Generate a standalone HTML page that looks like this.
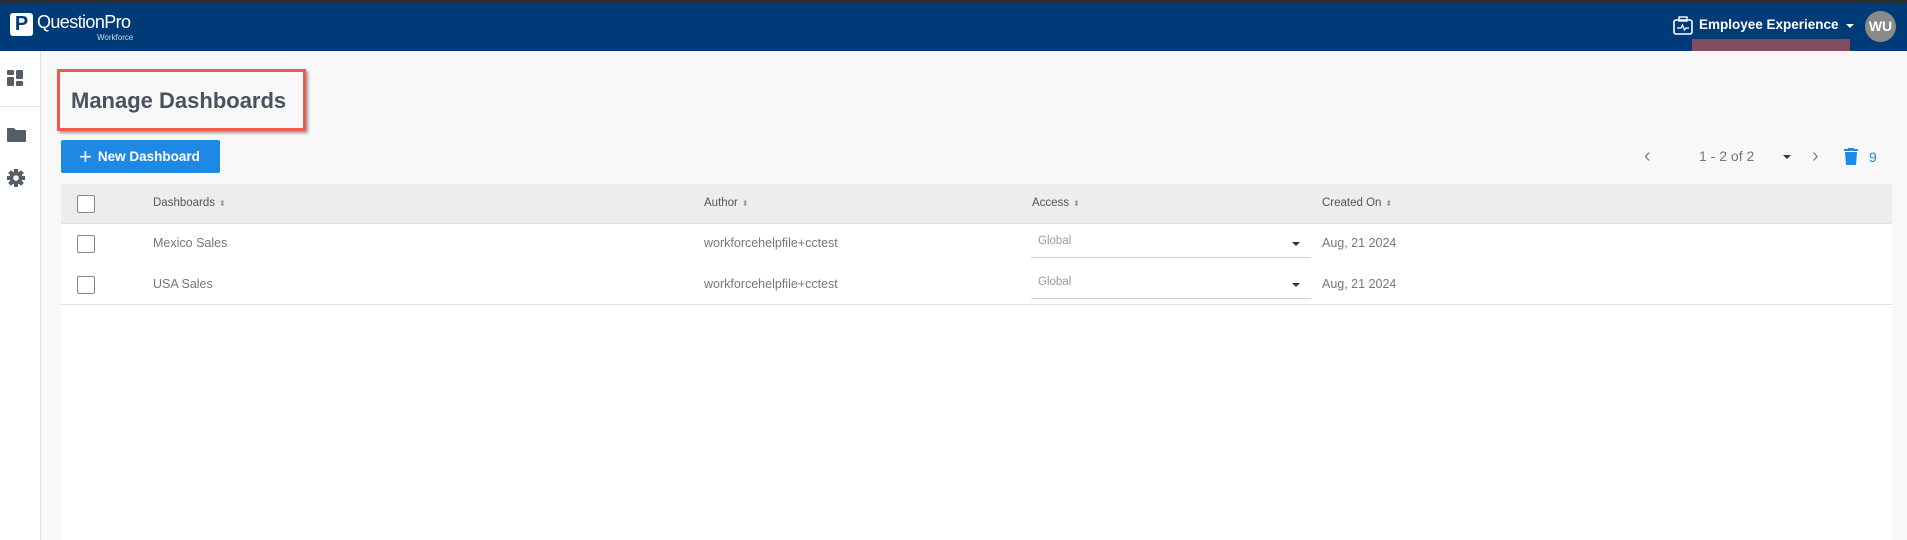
<!DOCTYPE html>
<html><head><meta charset="utf-8"><style>
*{margin:0;padding:0;box-sizing:border-box}
body{width:1907px;height:540px;overflow:hidden;background:#f8f8f8;font-family:"Liberation Sans",sans-serif;position:relative}
.abs{position:absolute}
.top{left:0;top:0;width:1907px;height:4px;background:#2b2f33}
.hdr{left:0;top:3px;width:1907px;height:48px;background:#003b79}
.side{left:0;top:51px;width:41px;height:489px;background:#fff;border-right:1px solid #e2e2e2}
.panel{left:61px;top:184px;width:1831px;height:356px;background:#fff}
.th{left:61px;top:184px;width:1831px;height:40px;background:#ededed;border-bottom:1px solid #e0e0e0}
.row{left:61px;width:1831px;height:41px;border-bottom:1px solid #e0e0e0;background:#fff}
.cb{width:18px;height:18px;border:1px solid #888;border-radius:2px;background:#fff}
.t{font-size:12.5px;color:#777}
.h{font-size:11.5px;color:#555}
.sort{font-size:8px;color:#999;margin-left:4px}
</style></head><body>
<div class="abs hdr"></div>
<div class="abs top"></div>
<div class="abs" style="left:10px;top:13px;width:23px;height:23px;background:#fff;border-radius:3px;color:#003b79;font:bold 20px/23px 'Liberation Sans';text-align:center">P</div>
<div class="abs" style="left:37px;top:12px;color:#fff;font-size:18px;letter-spacing:-0.6px">QuestionPro</div>
<div class="abs" style="left:97px;top:33px;color:#cfd8e6;font-size:8px">Workforce</div>
<svg class="abs" style="left:1672px;top:15px" width="22" height="22" viewBox="0 0 22 22"><rect x="2" y="5" width="18" height="14" rx="2" fill="none" stroke="#fff" stroke-width="1.6"/><rect x="7" y="2" width="8" height="4" fill="none" stroke="#fff" stroke-width="1.4"/><path d="M5 13h4l1.5-3 2 5 1.5-2h3" fill="none" stroke="#fff" stroke-width="1.2"/></svg>
<div class="abs" style="left:1699px;top:17px;color:#fff;font-weight:bold;font-size:13.5px">Employee Experience</div>
<div class="abs" style="left:1846px;top:24px;width:0;height:0;border-left:4px solid transparent;border-right:4px solid transparent;border-top:4px solid #fff"></div>
<div class="abs" style="left:1865px;top:11px;width:31px;height:31px;border-radius:50%;background:#8a8a8a;color:#fff;font:bold 14px/31px 'Liberation Sans';text-align:center">WU</div>
<div class="abs" style="left:1692px;top:39px;width:158px;height:12px;background:#834b5e"></div>
<div class="abs side"></div>
<div class="abs" style="left:0;top:106px;width:41px;height:1px;background:#e2e2e2"></div>
<svg class="abs" style="left:7px;top:70px" width="18" height="18" viewBox="0 0 18 18" fill="#555d66"><rect x="0" y="0" width="7" height="5" rx="1"/><rect x="9" y="0" width="7" height="9" rx="1"/><rect x="0" y="7" width="7" height="9" rx="1"/><rect x="9" y="11" width="7" height="5" rx="1"/></svg>
<svg class="abs" style="left:7px;top:127px" width="20" height="16" viewBox="0 0 20 16" fill="#555d66"><path d="M0 2a1 1 0 0 1 1-1h6l2 2h9a1 1 0 0 1 1 1v10a1 1 0 0 1-1 1H1a1 1 0 0 1-1-1z"/></svg>
<svg class="abs" style="left:6px;top:168px" width="20" height="20" viewBox="0 0 20 20"><g fill="#555d66"><circle cx="10" cy="10" r="6.5"/><g stroke="#555d66" stroke-width="4"><path d="M10 1v18M1 10h18M3.6 3.6l12.8 12.8M16.4 3.6L3.6 16.4"/></g></g><circle cx="10" cy="10" r="2.8" fill="#fff"/></svg>
<div class="abs" style="left:57px;top:69px;width:249px;height:62px;border:3px solid #f05a4a;box-shadow:2px 2px 3px rgba(0,0,0,.4)"></div>
<div class="abs" style="left:71px;top:88px;font-size:22px;font-weight:bold;color:#4a5260">Manage Dashboards</div>
<div class="abs" style="left:61px;top:140px;width:159px;height:33px;background:#1e88e5;border-radius:2px;color:#fff;font-size:13.5px;font-weight:bold;line-height:33px;padding-left:18px"><span style="font-size:22px;font-weight:normal;vertical-align:-3px;margin-right:6px">+</span>New Dashboard</div>
<div class="abs" style="left:1644px;top:145px;font-size:20px;color:#888">‹</div>
<div class="abs" style="left:1699px;top:148px;font-size:14px;color:#777">1 - 2 of 2</div>
<div class="abs" style="left:1783px;top:155px;width:0;height:0;border-left:4px solid transparent;border-right:4px solid transparent;border-top:4px solid #333"></div>
<div class="abs" style="left:1812px;top:145px;font-size:20px;color:#888">›</div>
<svg class="abs" style="left:1844px;top:148px" width="14" height="17" viewBox="0 0 14 17" fill="#1e88e5"><rect x="0" y="1" width="14" height="2"/><rect x="4" y="0" width="6" height="2"/><path d="M1 4h12l-1 13H2z"/></svg>
<div class="abs" style="left:1869px;top:149px;font-size:14px;color:#1e88e5">9</div>
<div class="abs panel"></div>
<div class="abs th"></div>
<div class="abs row" style="top:224px"></div>
<div class="abs row" style="top:264px"></div>
<div class="abs cb" style="left:77px;top:195px"></div>
<div class="abs h" style="left:153px;top:197px">Dashboards<span class="sort">⬍</span></div>
<div class="abs h" style="left:704px;top:197px">Author<span class="sort">⬍</span></div>
<div class="abs h" style="left:1032px;top:197px">Access<span class="sort">⬍</span></div>
<div class="abs h" style="left:1322px;top:197px">Created On<span class="sort">⬍</span></div>
<div class="abs cb" style="left:77px;top:235px"></div>
<div class="abs t" style="left:153px;top:236px">Mexico Sales</div>
<div class="abs t" style="left:704px;top:236px">workforcehelpfile+cctest</div>
<div class="abs" style="left:1031px;top:228px;width:280px;height:30px;border-bottom:1px solid #ccc;font-size:11.5px;color:#999;padding:7px 7px">Global</div>
<div class="abs" style="left:1292px;top:242px;border-left:4px solid transparent;border-right:4px solid transparent;border-top:4px solid #333"></div>
<div class="abs t" style="left:1322px;top:236px">Aug, 21 2024</div>
<div class="abs cb" style="left:77px;top:276px"></div>
<div class="abs t" style="left:153px;top:277px">USA Sales</div>
<div class="abs t" style="left:704px;top:277px">workforcehelpfile+cctest</div>
<div class="abs" style="left:1031px;top:269px;width:280px;height:30px;border-bottom:1px solid #ccc;font-size:11.5px;color:#999;padding:7px 7px">Global</div>
<div class="abs" style="left:1292px;top:283px;border-left:4px solid transparent;border-right:4px solid transparent;border-top:4px solid #333"></div>
<div class="abs t" style="left:1322px;top:277px">Aug, 21 2024</div>
</body></html>
